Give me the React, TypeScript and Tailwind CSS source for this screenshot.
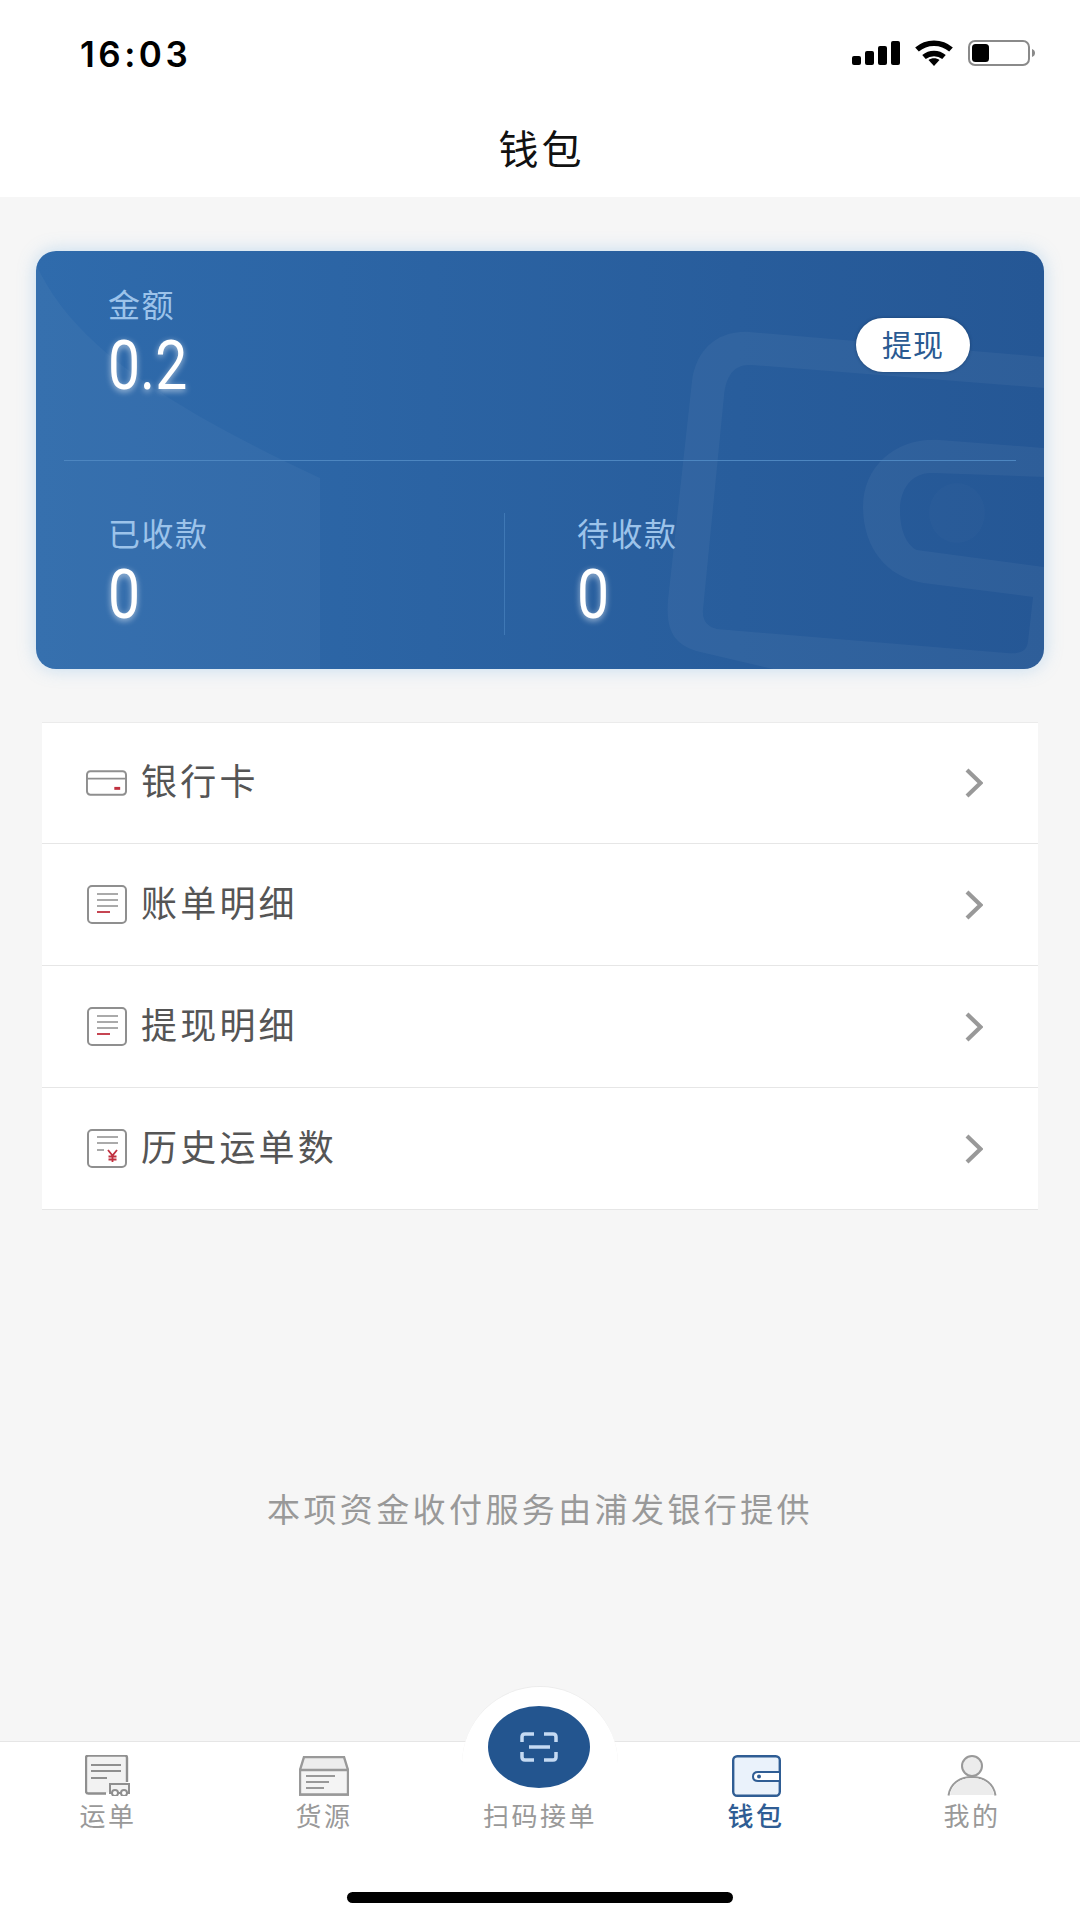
const GREY = '#8f8f8f';
const RED = '#c0303f';

function SignalIcon() {
  return (
    <svg width="48" height="24" viewBox="0 0 48 24" fill="#000">
      <rect x="0" y="15" width="9" height="9" rx="2" />
      <rect x="13" y="10" width="9" height="14" rx="2" />
      <rect x="26" y="5" width="9" height="19" rx="2" />
      <rect x="39" y="0" width="9" height="24" rx="2" />
    </svg>
  );
}

function WifiIcon() {
  return (
    <svg width="40" height="26" viewBox="0 0 40 26" fill="none" stroke="#000" strokeWidth="5.500">
      <path d="M3 9.500C12.500 1 27.500 1 37 9.500" />
      <path d="M10 17c5.800-4.800 14.200-4.800 20 0" />
      <path d="M20 26l-5.500-6c3-2.500 8-2.500 11 0z" fill="#000" stroke="none" />
    </svg>
  );
}

function BatteryIcon() {
  return (
    <svg width="68" height="26" viewBox="0 0 68 26" fill="none">
      <rect x="1" y="1" width="60" height="24" rx="6" stroke="#8a8a8a" strokeWidth="2" />
      <rect x="4" y="4" width="17" height="18" rx="3.500" fill="#000" />
      <path d="M64 9c2 .7 3 2 3 4s-1 3.300-3 4z" fill="#8a8a8a" />
    </svg>
  );
}

function CardDecor() {
  return (
    <svg className="absolute inset-0 pointer-events-none" width="1008" height="418" viewBox="0 0 1008 418" fill="none">
      <path d="M0 13C35 90 120 150 284 227V418H0Z" fill="#ffffff" fillOpacity="0.035" />
      <path
        fillRule="evenodd"
        d="M1008 106L714 81C680 79 660 100 656 130L632 349C630 375 635 392 660 400L737 418H1008Z
           M1008 137L715 114C698 113 690 125 688 145L667 359C666 370 672 376 681 378L971 402C985 403 991 400 992 390L997 346L887 332C850 326 827 296 827 256C827 215 860 186 904 189L1008 197Z
           M1008 226L897 222C876 221 864 238 864 259C864 278 870 294 881 299L1008 316Z"
        fill="#ffffff"
        fillOpacity="0.045"
      />
      <ellipse cx="921" cy="262" rx="28" ry="30" fill="#ffffff" fillOpacity="0.015" />
    </svg>
  );
}

function BankCardIcon() {
  return (
    <svg width="42" height="26" viewBox="0 0 42 26" fill="none">
      <rect x="1" y="1" width="40" height="24" rx="3.500" stroke={GREY} strokeWidth="2" />
      <path d="M1 8.500H41" stroke={GREY} strokeWidth="1.600" />
      <rect x="29" y="17" width="6" height="3" fill={RED} />
    </svg>
  );
}

function BillIcon() {
  return (
    <svg width="40" height="39" viewBox="0 0 40 39" fill="none">
      <rect x="1" y="1" width="38" height="37" rx="4" stroke={GREY} strokeWidth="2" />
      <path d="M10 9H31M10 15H31M10 21H31" stroke={GREY} strokeWidth="1.600" />
      <path d="M10 27H23" stroke={RED} strokeWidth="1.800" />
    </svg>
  );
}

function YenBillIcon() {
  return (
    <svg width="40" height="39" viewBox="0 0 40 39" fill="none">
      <rect x="1" y="1" width="38" height="37" rx="4" stroke={GREY} strokeWidth="2" />
      <path d="M10 8H31M10 14H31M10 21H17" stroke={GREY} strokeWidth="1.600" />
      <path d="M21 21L25.500 26.500L30 21M25.500 26.500V33M21.500 27.500H29.500M21.500 30.500H29.500" stroke={RED} strokeWidth="1.800" />
    </svg>
  );
}

function Chevron() {
  return (
    <svg width="18" height="30" viewBox="0 0 18 30" fill="none" stroke="#999999" strokeWidth="4.200">
      <path d="M2 2L15.500 15L2 28" />
    </svg>
  );
}

function WaybillIcon() {
  return (
    <svg width="46" height="41" viewBox="0 0 46 41" fill="none" stroke="#8f8f8f">
      <path d="M21 38.500H3.500C2 38.500 1 37.500 1 36V3C1 1.500 2 .500 3.500 .500H40C41.500 .500 42 1.500 42 3V27" strokeWidth="2.400" fill="#f2f2f2" />
      <path d="M6 10H36M6 16H36M6 23H22" strokeWidth="1.800" />
      <path d="M25 29H44V38H25Z" strokeWidth="2" fill="#f2f2f2" />
      <circle cx="30" cy="38" r="3" strokeWidth="2" fill="#ffffff" />
      <circle cx="39" cy="38" r="3" strokeWidth="2" fill="#ffffff" />
    </svg>
  );
}

function CargoIcon() {
  return (
    <svg width="50" height="40" viewBox="0 0 50 40" fill="none" stroke="#999999">
      <path d="M1 38.500V14L5 1H45L49 14V38.500Z" strokeWidth="2.400" fill="#ededed" />
      <path d="M1 14H49V38.500H1Z" strokeWidth="2.400" fill="#f4f4f4" />
      <path d="M7 20H36M7 26H30M7 32H25" strokeWidth="2" />
    </svg>
  );
}

function WalletIcon() {
  return (
    <svg width="49" height="42" viewBox="0 0 49 42" fill="none" stroke="#2f5d94">
      <rect x="1.200" y="1.200" width="46.600" height="39.600" rx="4" strokeWidth="2.400" fill="#eaf2fb" />
      <path d="M47 17H26C23 17 21 18.800 21 21.500S23 26 26 26H47" strokeWidth="2" fill="#ffffff" />
      <circle cx="27" cy="21.500" r="2" fill="#2f5d94" stroke="none" />
    </svg>
  );
}

function UserIcon() {
  return (
    <svg width="50" height="41" viewBox="0 0 50 41" fill="none" stroke="#999999">
      <circle cx="25" cy="11" r="10" strokeWidth="2" fill="#ececec" />
      <path d="M1.500 40.500C3 29 12 22 25 22S47 29 48.500 40.500" strokeWidth="2" />
      <path d="M3 40C5 29 13 23 25 23S45 29 47 40Z" fill="#ececec" stroke="none" />
    </svg>
  );
}

function ScanIcon() {
  return (
    <svg width="38" height="30" viewBox="0 0 38 30" fill="none" stroke="#c5daf3" strokeWidth="3.500">
      <path d="M14 2H5C3 2 2 3 2 5V10" />
      <path d="M24 2H33C35 2 36 3 36 5V10" />
      <path d="M14 28H5C3 28 2 27 2 25V20" />
      <path d="M24 28H33C35 28 36 27 36 25V20" />
      <path d="M9 15H30" />
    </svg>
  );
}

const ROWS = [
  { label: '银行卡', icon: <BankCardIcon /> },
  { label: '账单明细', icon: <BillIcon /> },
  { label: '提现明细', icon: <BillIcon /> },
  { label: '历史运单数', icon: <YenBillIcon /> },
];

const FONT = "font-['Liberation_Sans','Noto_Sans_CJK_SC',sans-serif]";

function Amount({ value }: { value: string }) {
  return (
    <div className="h-[68px] flex items-center origin-left scale-x-[0.84] font-['Roboto',sans-serif] text-[68px] leading-none text-white [text-shadow:0_2px_7px_rgba(255,255,255,0.6)]">
      {value}
    </div>
  );
}

function Label({ children }: { children: string }) {
  return <div className="text-[32px] leading-[34px] tracking-[1.500px] text-[#9cc3ea]">{children}</div>;
}

function Tab({ label, icon, active }: { label: string; icon: React.ReactNode; active?: boolean }) {
  return (
    <div className="flex-1 flex flex-col items-center pt-[13px]">
      <div className="h-[41px] flex items-center justify-center">{icon}</div>
      <div
        className={`mt-[6px] text-[26px] leading-[30px] tracking-[2.500px] ${active ? 'text-[#2f5d94] font-medium' : 'text-[#999999]'}`}
      >
        {label}
      </div>
    </div>
  );
}

export default function App() {
  return (
    <div className={`w-[1080px] h-[1920px] flex flex-col bg-[#f6f6f6] overflow-hidden ${FONT}`}>
      <div className="h-[197px] bg-white flex flex-col shrink-0">
        <div className="h-[106px] pl-[80px] pr-[44px] flex items-center justify-between">
          <span className="font-['Inter',sans-serif] font-semibold text-[35px] tracking-[3.500px] text-black pt-[2px]">16:03</span>
          <div className="flex items-center gap-[14px]">
            <SignalIcon />
            <WifiIcon />
            <BatteryIcon />
          </div>
        </div>
        <div className="flex-1 flex items-start justify-center">
          <span className="text-[40px] leading-[88px] pl-[3px] tracking-[3px] text-[#111111]">钱包</span>
        </div>
      </div>

      <main className="flex-1 flex flex-col items-center">
        <section className="relative mt-[54px] w-[1008px] h-[418px] rounded-[20px] overflow-hidden bg-gradient-to-r from-[#2f6bac] to-[#255795] shadow-[0_0_18px_rgba(100,170,225,0.35)] shrink-0">
          <CardDecor />
          <div className="relative h-[209px] px-[72px] pt-[38px] flex justify-between items-start">
            <div>
              <Label>金额</Label>
              <div className="mt-[9px]">
                <Amount value="0.2" />
              </div>
            </div>
            <button className="mt-[29px] mr-[2px] w-[114px] h-[54px] rounded-full bg-white text-[#2a5a92] text-[30px] tracking-[1px] shadow-[0_0_3px_rgba(20,50,90,0.7)]">
              提现
            </button>
          </div>
          <div className="relative mx-[28px] h-px bg-[#4d86c0]" />
          <div className="relative flex flex-1 pt-[52px]">
            <div className="w-[469px] pl-[72px] h-[122px] border-r border-[#3f78b5]">
              <div className="pt-[5px]">
                <Label>已收款</Label>
                <div className="mt-[9px]">
                  <Amount value="0" />
                </div>
              </div>
            </div>
            <div className="pl-[72px] pt-[5px]">
              <Label>待收款</Label>
              <div className="mt-[9px]">
                <Amount value="0" />
              </div>
            </div>
          </div>
        </section>

        <section className="mt-[53px] w-[996px] bg-white border-t border-[#ebebeb] shrink-0">
          {ROWS.map((row) => (
            <div
              key={row.label}
              className="h-[122px] first:h-[121px] pl-[44px] pr-[55px] flex items-center border-b border-[#e6e6e6]"
            >
              <div className="w-[41px] flex justify-center items-center">{row.icon}</div>
              <span className="ml-[14px] text-[36px] tracking-[3.200px] text-[#555555]">{row.label}</span>
              <span className="ml-auto flex">
                <Chevron />
              </span>
            </div>
          ))}
        </section>

        <p className="mt-[281px] text-[33px] leading-[40px] tracking-[3.400px] text-[#999999]">本项资金收付服务由浦发银行提供</p>
      </main>

      <footer className="relative h-[179px] bg-white border-t border-[#e6e6e6] shrink-0 flex">
        <div className="absolute left-[462px] -top-[56px] w-[156px] h-[110px] rounded-t-full bg-white border-t border-[#ececec]" />
        <div className="absolute left-[488px] -top-[36px] w-[102px] h-[82px] rounded-[50%] bg-[#23558f] flex items-center justify-center">
          <ScanIcon />
        </div>
        <Tab label="运单" icon={<WaybillIcon />} />
        <Tab label="货源" icon={<CargoIcon />} />
        <div className="relative flex-1 flex justify-center pt-[60px]">
          <span className="text-[26px] leading-[30px] tracking-[2.500px] text-[#999999]">扫码接单</span>
        </div>
        <Tab label="钱包" icon={<WalletIcon />} active />
        <Tab label="我的" icon={<UserIcon />} />
        <div className="absolute left-[347px] top-[150px] w-[386px] h-[11px] rounded-full bg-black" />
      </footer>
    </div>
  );
}
